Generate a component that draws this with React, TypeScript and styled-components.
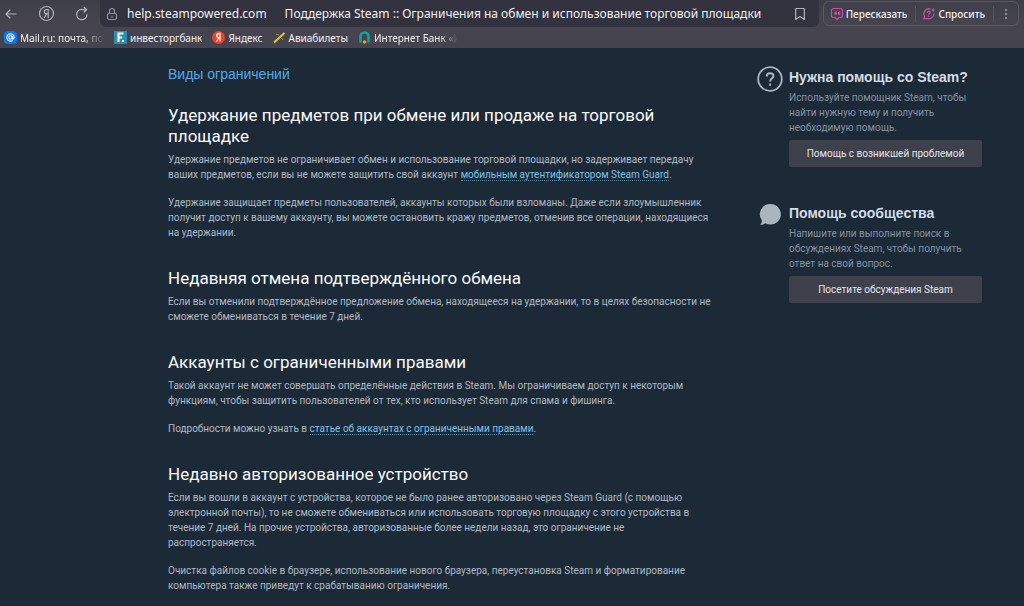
import React from "react";
import styled, { createGlobalStyle } from "styled-components";

const GlobalStyle = createGlobalStyle`
  * { box-sizing: border-box; }
  body {
    margin: 0;
    background: #1c2937;
    font-family: "Liberation Sans", Arial, sans-serif;
  }
`;

const Browser = styled.header`
  background: linear-gradient(#3e3e49, #46454f 24px, #45444e);
  color: #f1f1f4;
  font-family: "Noto Sans", sans-serif;
`;

const TopBar = styled.div`
  display: flex;
  align-items: center;
  height: 27px;
  padding-right: 5px;
`;

const NavButtons = styled.nav`
  display: flex;
  flex: none;
  align-items: center;
  gap: 19px;
  width: 100px;
  padding-left: 3px;
`;

const IconButton = styled.button`
  display: flex;
  flex: none;
  padding: 0;
  border: 0;
  background: none;
  color: inherit;
`;

const AddressBar = styled.div`
  display: flex;
  flex: 1;
  align-items: center;
  min-width: 0;
  height: 27px;
  padding: 0 12px 0 5px;
  border-radius: 0 0 6px 6px;
  background: #33323f;
  font-size: 12px;
  white-space: nowrap;
`;

const Host = styled.span`
  margin: 0 18px 0 8px;
`;

const PageTitle = styled.span`
  flex: 1;
  min-width: 0;
`;

const Assistant = styled.div`
  display: flex;
  flex: none;
  align-items: center;
  height: 25px;
  margin-left: 4px;
  border: 1px solid #5a5963;
  border-radius: 6px;
`;

const AssistantButton = styled.button`
  display: flex;
  align-items: center;
  gap: 2px;
  height: 16px;
  padding: 0 8px 0 6px;
  border: 0;
  border-right: 1px solid #55545f;
  background: none;
  color: inherit;
  font: 500 10px "Noto Sans", sans-serif;
`;

const MenuButton = styled(IconButton)`
  padding: 0 10px;
`;

const Bookmarks = styled.nav`
  display: flex;
  align-items: center;
  gap: 10px;
  height: 21px;
  padding: 0 4px;
`;

const Bookmark = styled.a<{ $fade?: boolean }>`
  display: flex;
  align-items: center;
  gap: 3px;
  max-width: 100px;
  overflow: hidden;
  color: inherit;
  font-size: 10px;
  line-height: 16px;
  text-decoration: none;
  white-space: nowrap;
  mask-image: ${(p) => (p.$fade ? "linear-gradient(90deg, #000 80%, transparent)" : "none")};

  svg { flex: none; }
`;

const Page = styled.div`
  display: grid;
  grid-template-columns: minmax(0, 1fr) 225px;
  gap: 24px;
  padding: 16px 42px 0 168px;
`;

const Topic = styled.h1`
  margin: 0 0 21px;
  color: #55a9e0;
  font-size: 14px;
  font-weight: 400;
  line-height: 20px;
`;

const Section = styled.section`
  margin-bottom: 28px;

  &:last-child { margin-bottom: 0; }
`;

const Heading = styled.h2`
  margin: 0 0 5px;
  color: #fafbfc;
  font-family: Roboto, Arial, sans-serif;
  font-size: 17px;
  font-weight: 400;
  line-height: 21px;
`;

const Text = styled.p`
  margin: 0 0 13px;
  color: #b0bac4;
  font-family: Roboto, Arial, sans-serif;
  font-size: 10px;
  line-height: 15px;

  &:last-child { margin-bottom: 0; }
`;

const TextLink = styled.a`
  border-bottom: 1px dotted #4f84a0;
  color: #7dc4e6;
  text-decoration: none;
`;

const Sidebar = styled.aside`
  display: flex;
  flex-direction: column;
  gap: 35px;
  padding-top: 2px;
`;

const Help = styled.section`
  display: grid;
  grid-template-columns: 26px minmax(0, 1fr);
  gap: 6px;
`;

const HelpTitle = styled.h2`
  margin: 0;
  color: #d3dde7;
  font-size: 14px;
  line-height: 22px;
`;

const HelpText = styled.p`
  margin: 2px 0 5px;
  color: #8493a1;
  font-family: Roboto, Arial, sans-serif;
  font-size: 10px;
  line-height: 15px;
`;

const HelpButton = styled.button`
  width: 100%;
  height: 27px;
  padding: 0;
  border: 0;
  border-radius: 2px;
  background: #3e404b;
  color: #e4e6ea;
  font: 10px Roboto, Arial, sans-serif;
`;

const line = { fill: "none", stroke: "#b3b2bc", strokeWidth: 1.2, strokeLinecap: "round", strokeLinejoin: "round" } as const;

const BackIcon = () => (
  <svg width="16" height="16" viewBox="0 0 16 16" {...line}><path d="M13 8H3M7 4L3 8l4 4" /></svg>
);

const YandexIcon = () => (
  <svg width="17" height="17" viewBox="0 0 17 17" {...line}>
    <circle cx="8.500" cy="8.500" r="7" />
    <path d="M10.200 12.500v-8H8.600c-3 0-3 4.200-.2 4.200h1.800M8.600 8.800l-2.200 3.700" />
  </svg>
);

const ReloadIcon = () => (
  <svg width="16" height="16" viewBox="0 0 16 16" {...line}>
    <path d="M13 8.500a5.200 5.200 0 1 1-3-4.700h2.200M10 1.300l2.600 2.500L10 6.200" />
  </svg>
);

const LockIcon = () => (
  <svg width="14" height="14" viewBox="0 0 14 14" {...line} stroke="#92919c">
    <rect x="2.500" y="6.500" width="9" height="6" rx="1.500" />
    <path d="M4.500 6.500V4a2.500 2.500 0 0 1 5 0v2.500M7 9v1.200" />
  </svg>
);

const BookmarkIcon = () => (
  <svg width="14" height="14" viewBox="0 0 14 14" {...line}>
    <path d="M2.700 1.500h8.600v11L7 9.600l-4.300 2.900z" />
  </svg>
);

const RetellIcon = () => (
  <svg width="14" height="14" viewBox="0 0 14 14" {...line} stroke="#c4529f">
    <path d="M3.500 1.500h7a2 2 0 0 1 2 2v5a2 2 0 0 1-2 2H9l-2 2-2-2H3.500a2 2 0 0 1-2-2v-5a2 2 0 0 1 2-2z" />
    <path d="M6.300 4.800q-1.500.3-1.500 1.500v.8h1.500V6H5M9.800 4.800q-1.500.3-1.500 1.500v.8h1.500V6H8.500" />
  </svg>
);

const AskIcon = () => (
  <svg width="14" height="14" viewBox="0 0 14 14" {...line} stroke="#c4529f">
    <path d="M8 1.800A5.200 5.200 0 0 0 2.600 9.500L1.800 12l3-.6A5.200 5.200 0 0 0 12 6.800" />
    <path d="M5.500 5.300c.2-1.800 3-1.500 2.700.2-.2 1-1.400 1-1.400 2.200M6.700 9.500v.1" />
    <path d="M11.200.8l.6 1.600 1.600.6-1.600.6-.6 1.600-.6-1.600L9 3l1.600-.6z" fill="#e0609e" stroke="none" />
  </svg>
);

const DotsIcon = () => (
  <svg width="4" height="14" viewBox="0 0 4 14" fill="#a9a8b2">
    <circle cx="2" cy="3" r="1" /><circle cx="2" cy="7" r="1" /><circle cx="2" cy="11" r="1" />
  </svg>
);

const MailIcon = () => (
  <svg width="13" height="13" viewBox="0 0 13 13">
    <rect width="13" height="13" rx="4" fill="#0878f0" />
    <g fill="none" stroke="#fff" strokeWidth="1.100">
      <circle cx="6.500" cy="6.500" r="1.700" />
      <path d="M8.200 4.900v2c0 1.600 2 1.200 2-.4a3.700 3.700 0 1 0-1.600 3" />
    </g>
  </svg>
);

const InvestIcon = () => (
  <svg width="13" height="13" viewBox="0 0 13 13">
    <path d="M0 0h13v13H0z" fill="#298fb5" />
    <path d="M4.500 11V2.500h5M4.500 6.500h3.700" fill="none" stroke="#fff" strokeWidth="2" />
    <path d="M8 9h2v2H8z" fill="#fff" />
  </svg>
);

const YandexRedIcon = () => (
  <svg width="13" height="13" viewBox="0 0 13 13">
    <circle cx="6.500" cy="6.500" r="6.500" fill="#f33f27" />
    <path d="M8 10.500v-8H6.800c-2.600 0-2.600 4.100 0 4.100H8M6.600 6.800l-2 3.700" fill="none" stroke="#fff" strokeWidth="1.300" />
  </svg>
);

const TicketIcon = () => (
  <svg width="13" height="13" viewBox="0 0 13 13" fill="none" stroke="#efc81e">
    <path d="M1 11.500L11.500 2" strokeWidth="2" />
    <path d="M3 3l3 1M8.500 7l1.500 2" strokeWidth="1" stroke="#b6932a" />
  </svg>
);

const BankIcon = () => (
  <svg width="13" height="13" viewBox="0 0 13 13">
    <path d="M2.500 11.500V5.500a4 4 0 0 1 8 0v6" fill="none" stroke="#16a39b" strokeWidth="2.600" />
    <path d="M6.500 9l2 2-2 2-2-2z" fill="#e3b32c" />
  </svg>
);

const QuestionIcon = () => (
  <svg width="26" height="26" viewBox="0 0 26 26" fill="none" stroke="#a9b6c2" strokeWidth="2">
    <circle cx="13" cy="13" r="11.800" strokeWidth="1.800" />
    <path d="M9.700 10.400c0-4.400 6.900-4.200 6.700-.3-.1 2.400-3.300 2.700-3.300 5.500M13.100 17.500v2.300" />
  </svg>
);

const BubbleIcon = () => (
  <svg width="26" height="26" viewBox="0 0 26 26" fill="#a9b6c2">
    <path d="M13.500 2a10.300 10.300 0 1 1-5 19.300c-1.500 1.300-3.500 1.700-5.500 1.500 1.300-1.300 2-2.700 1.800-4.500A10.300 10.300 0 0 1 13.500 2z" />
  </svg>
);

export default function App() {
  return (
    <>
      <GlobalStyle />
      <Browser>
        <TopBar>
          <NavButtons>
            <IconButton aria-label="Назад"><BackIcon /></IconButton>
            <IconButton aria-label="Яндекс"><YandexIcon /></IconButton>
            <IconButton aria-label="Обновить"><ReloadIcon /></IconButton>
          </NavButtons>
          <AddressBar>
            <LockIcon />
            <Host>help.steampowered.com</Host>
            <PageTitle>Поддержка Steam :: Ограничения на обмен и использование торговой площадки</PageTitle>
            <IconButton aria-label="Добавить в закладки"><BookmarkIcon /></IconButton>
          </AddressBar>
          <Assistant>
            <AssistantButton><RetellIcon />Пересказать</AssistantButton>
            <AssistantButton><AskIcon />Спросить</AssistantButton>
            <MenuButton aria-label="Меню"><DotsIcon /></MenuButton>
          </Assistant>
        </TopBar>
        <Bookmarks>
          <Bookmark href="#" $fade><MailIcon />Mail.ru: почта, пои</Bookmark>
          <Bookmark href="#"><InvestIcon />инвесторгбанк</Bookmark>
          <Bookmark href="#"><YandexRedIcon />Яндекс</Bookmark>
          <Bookmark href="#"><TicketIcon />Авиабилеты</Bookmark>
          <Bookmark href="#" $fade><BankIcon />Интернет Банк «И</Bookmark>
        </Bookmarks>
      </Browser>
      <Page>
        <main>
          <Topic>Виды ограничений</Topic>
          <Section>
            <Heading>Удержание предметов при обмене или продаже на торговой<br />площадке</Heading>
            <Text>
              Удержание предметов не ограничивает обмен и использование торговой площадки, но задерживает передачу<br />
              ваших предметов, если вы не можете защитить свой аккаунт <TextLink href="#">мобильным аутентификатором Steam Guard</TextLink>.
            </Text>
            <Text>
              Удержание защищает предметы пользователей, аккаунты которых были взломаны. Даже если злоумышленник<br />
              получит доступ к вашему аккаунту, вы можете остановить кражу предметов, отменив все операции, находящиеся<br />
              на удержании.
            </Text>
          </Section>
          <Section>
            <Heading>Недавняя отмена подтверждённого обмена</Heading>
            <Text>
              Если вы отменили подтверждённое предложение обмена, находящееся на удержании, то в целях безопасности не<br />
              сможете обмениваться в течение 7 дней.
            </Text>
          </Section>
          <Section>
            <Heading>Аккаунты с ограниченными правами</Heading>
            <Text>
              Такой аккаунт не может совершать определённые действия в Steam. Мы ограничиваем доступ к некоторым<br />
              функциям, чтобы защитить пользователей от тех, кто использует Steam для спама и фишинга.
            </Text>
            <Text>
              Подробности можно узнать в <TextLink href="#">статье об аккаунтах с ограниченными правами</TextLink>.
            </Text>
          </Section>
          <Section>
            <Heading>Недавно авторизованное устройство</Heading>
            <Text>
              Если вы вошли в аккаунт с устройства, которое не было ранее авторизовано через Steam Guard (с помощью<br />
              электронной почты), то не сможете обмениваться или использовать торговую площадку с этого устройства в<br />
              течение 7 дней. На прочие устройства, авторизованные более недели назад, это ограничение не<br />
              распространяется.
            </Text>
            <Text>
              Очистка файлов cookie в браузере, использование нового браузера, переустановка Steam и форматирование<br />
              компьютера также приведут к срабатыванию ограничения.
            </Text>
          </Section>
        </main>
        <Sidebar>
          <Help>
            <QuestionIcon />
            <div>
              <HelpTitle>Нужна помощь со Steam?</HelpTitle>
              <HelpText>Используйте помощник Steam, чтобы<br />найти нужную тему и получить<br />необходимую помощь.</HelpText>
              <HelpButton>Помощь с возникшей проблемой</HelpButton>
            </div>
          </Help>
          <Help>
            <BubbleIcon />
            <div>
              <HelpTitle>Помощь сообщества</HelpTitle>
              <HelpText>Напишите или выполните поиск в<br />обсуждениях Steam, чтобы получить<br />ответ на свой вопрос.</HelpText>
              <HelpButton>Посетите обсуждения Steam</HelpButton>
            </div>
          </Help>
        </Sidebar>
      </Page>
    </>
  );
}
